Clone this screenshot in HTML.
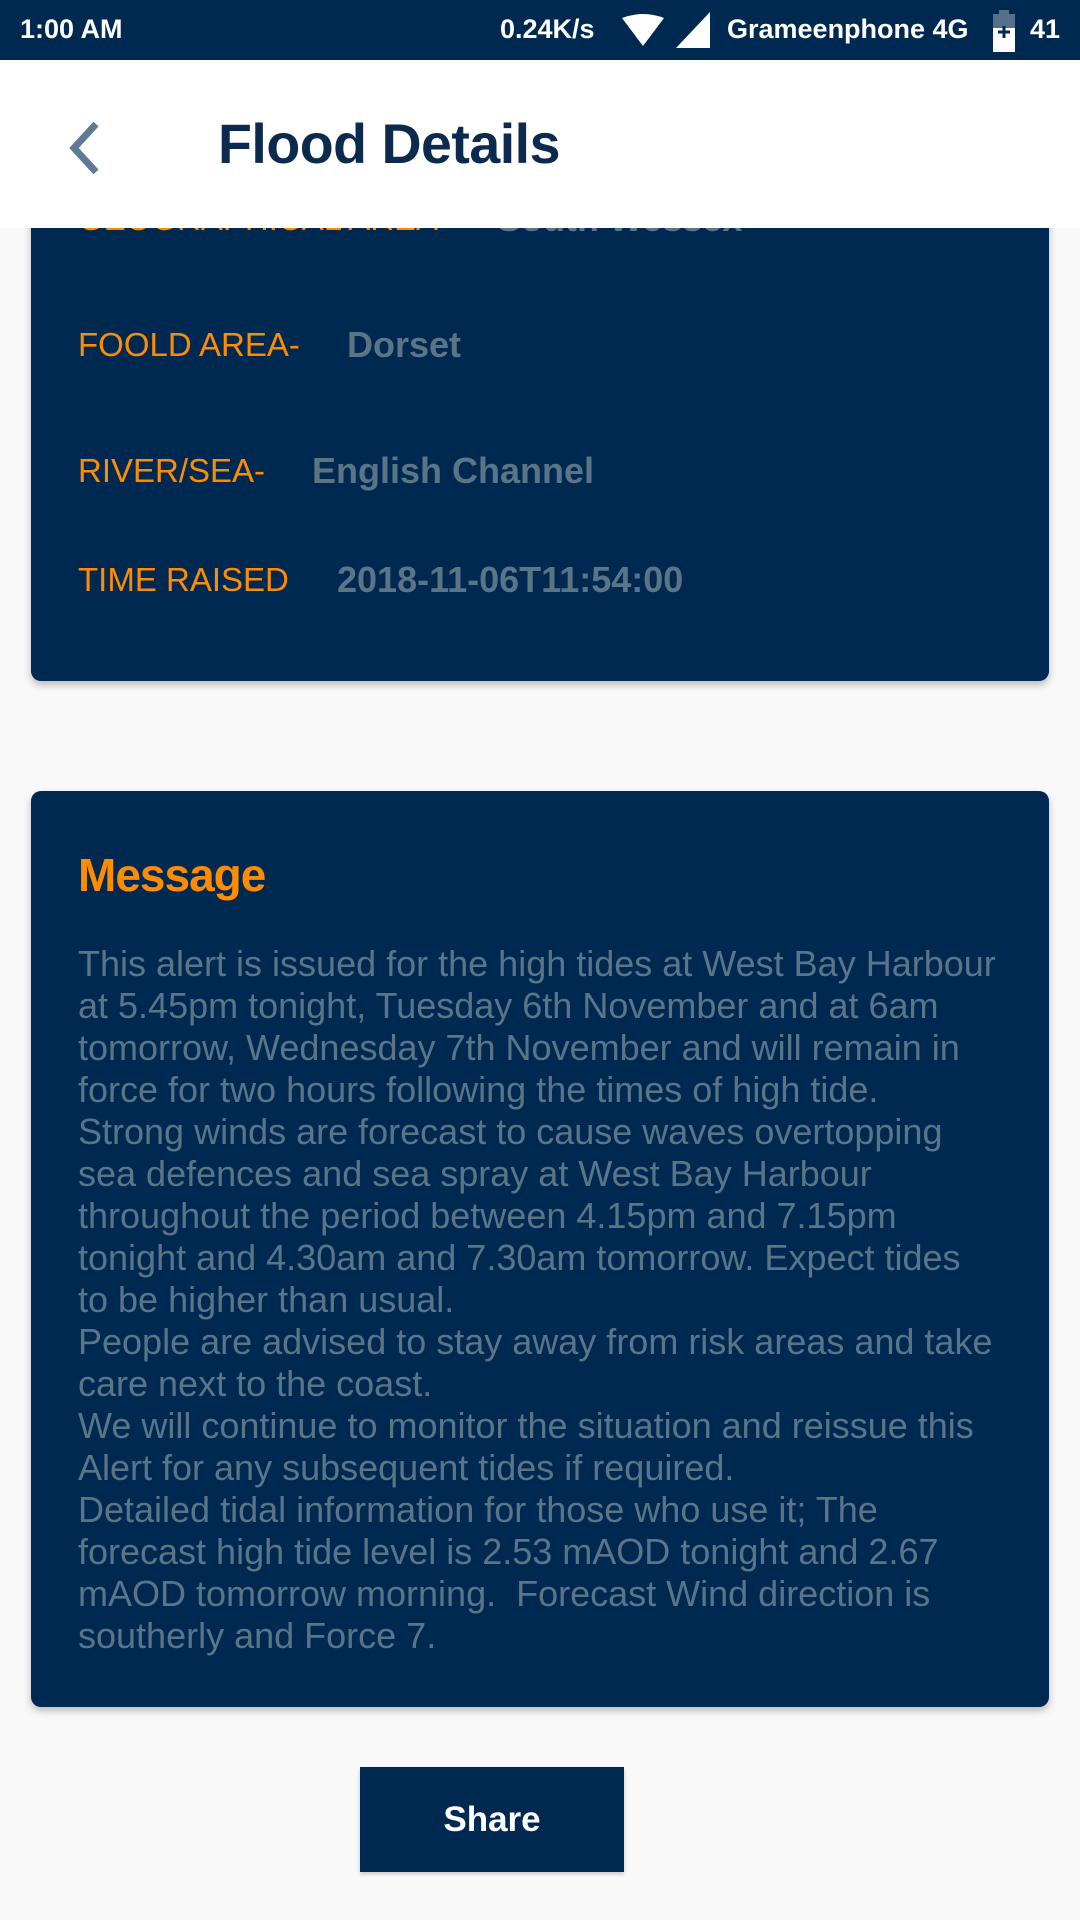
<!DOCTYPE html>
<html><head><meta charset="utf-8"><style>
*{margin:0;padding:0;box-sizing:border-box}
body{width:1080px;height:1920px;background:#f9f9f9;font-family:"Liberation Sans",sans-serif;position:relative;overflow:hidden}
.sb{position:absolute;left:0;top:0;width:1080px;height:60px;background:#002952;color:#fff;font-weight:bold;font-size:27px}
.sb span{position:absolute;top:14px}
.tb{position:absolute;left:0;top:60px;width:1080px;height:168px;background:#fff;z-index:5}
.tb h1{position:absolute;left:218px;top:52px;font-size:55.5px;color:#0b2a4e;font-weight:bold;letter-spacing:-0.5px}
.card{position:absolute;left:31px;width:1018px;background:#002952;border-radius:10px;box-shadow:0 4px 8px rgba(0,0,0,.25)}
.lab{position:absolute;left:78px;color:#ff8c00;font-size:33px;white-space:nowrap}
.val{position:absolute;color:#5b7587;font-size:36px;font-weight:bold;white-space:nowrap;margin-top:-2px}
.msg{position:absolute;left:78px;top:943px;color:#5b7587;font-size:36px;line-height:42px;white-space:nowrap}
.btn{position:absolute;left:360px;top:1767px;width:264px;height:105px;background:#002952;color:#fff;font-weight:bold;font-size:35px;text-align:center;line-height:105px;box-shadow:0 2px 4px rgba(0,0,0,.2)}
</style></head><body>
<div class="sb"><span style="left:20px">1:00 AM</span><span style="left:500px">0.24K/s</span>
<svg style="position:absolute;left:622px;top:14px" width="42" height="34"><path d="M0 4 Q21 -4 42 4 L21 32 Z" fill="#fff"/></svg>
<svg style="position:absolute;left:676px;top:12px" width="34" height="36"><path d="M34 0 L34 36 L0 36 Z" fill="#fff"/></svg>
<span style="left:727px">Grameenphone 4G</span>
<svg style="position:absolute;left:993px;top:10px" width="22" height="42"><rect x="6" y="0" width="10" height="4" fill="#55708a"/><rect x="0" y="4" width="22" height="38" fill="#fff"/><rect x="0" y="4" width="22" height="14" fill="#55708a"/><path d="M11 16v12M5 22h12" stroke="#002952" stroke-width="3"/></svg>
<span style="left:1030px">41</span></div>
<div class="tb"><svg style="position:absolute;left:62px;top:60px" width="40" height="56"><path d="M34 4 L12 28 L34 52" fill="none" stroke="#607a96" stroke-width="7"/></svg><h1>Flood Details</h1></div>
<div class="card" style="top:150px;height:531px"></div>
<div class="lab" style="top:200px">GEOGRAPHICAL AREA-</div><div class="val" style="left:497px;top:200px">South Wessex</div>
<div class="lab" style="top:326px">FOOLD AREA-</div><div class="val" style="left:347px;top:326px">Dorset</div>
<div class="lab" style="top:452px">RIVER/SEA-</div><div class="val" style="left:312px;top:452px">English Channel</div>
<div class="lab" style="top:561px">TIME RAISED</div><div class="val" style="left:337px;top:561px">2018-11-06T11:54:00</div>
<div class="card" style="top:791px;height:916px"></div>
<div style="position:absolute;left:78px;top:848px;color:#ff8c00;font-size:46px;font-weight:bold;letter-spacing:-1px">Message</div>
<div class="msg">This alert is issued for the high tides at West Bay Harbour<br>at 5.45pm tonight, Tuesday 6th November and at 6am<br>tomorrow, Wednesday 7th November and will remain in<br>force for two hours following the times of high tide.<br>Strong winds are forecast to cause waves overtopping<br>sea defences and sea spray at West Bay Harbour<br>throughout the period between 4.15pm and 7.15pm<br>tonight and 4.30am and 7.30am tomorrow. Expect tides<br>to be higher than usual.<br>People are advised to stay away from risk areas and take<br>care next to the coast.<br>We will continue to monitor the situation and reissue this<br>Alert for any subsequent tides if required.<br>Detailed tidal information for those who use it; The<br>forecast high tide level is 2.53 mAOD tonight and 2.67<br>mAOD tomorrow morning.&nbsp; Forecast Wind direction is<br>southerly and Force 7.</div>
<div class="btn">Share</div>
</body></html>
